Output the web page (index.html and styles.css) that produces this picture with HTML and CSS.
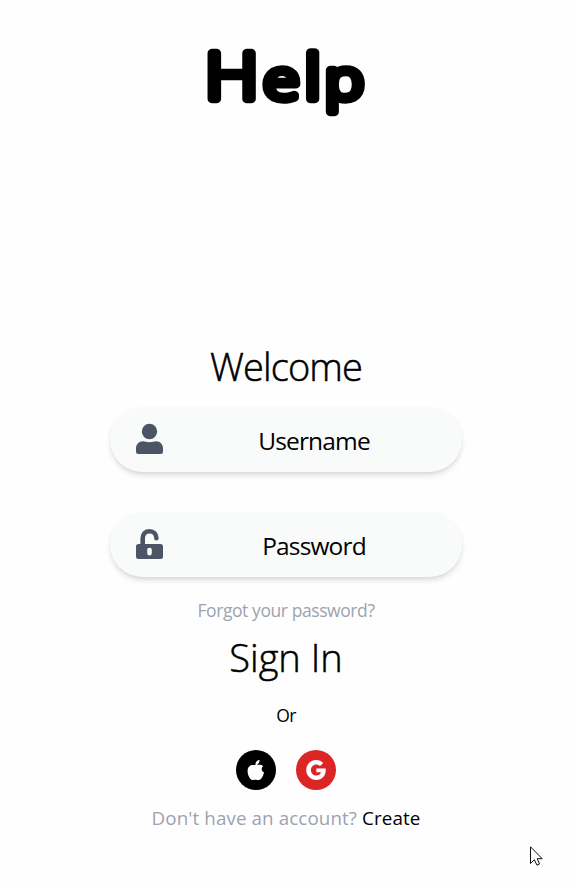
FILE: index.html
```html
<!DOCTYPE html>
<html lang="en">
<head>
    <meta charset="UTF-8">
    <meta name="viewport" content="width=device-width, initial-scale=1.0">
    <title>Help</title>
    <link rel="stylesheet" href="styles.css">
</head>
<body>
    <h1 class="logo">
        <svg width="180" height="90" viewBox="0 0 180 90">
            <text y="69" transform="scale(1.16 1)"><tspan x="4.3">H</tspan><tspan class="small" x="54.8">e</tspan><tspan class="ell" x="90.3">l</tspan><tspan class="small" x="107.8">p</tspan></text>
        </svg>
    </h1>

    <main class="login">
        <h2 class="welcome">Welcome</h2>

        <!-- login fields -->
        <div class="field">
            <svg class="field-icon" viewBox="0 0 27 30">
                <circle cx="13.5" cy="7.5" r="7.7"/>
                <path d="M7 17.2C9 17.2 10.5 18.2 13.5 18.2S18 17.2 20 17.2C24.5 17.2 27 20.5 27 24.5V27.5Q27 30 24.5 30H2.5Q0 30 0 27.5V24.5C0 20.5 2.5 17.2 7 17.2Z"/>
            </svg>
            <span class="field-text username">Username</span>
        </div>
        <div class="field">
            <svg class="field-icon" viewBox="0 0 27 30">
                <path class="shackle" d="M6.7 17V9.2C6.7 4.8 9.5 2.3 13.5 2.3S20.4 5 20.4 9.3"/>
                <path fill-rule="evenodd" d="M2.5 15H24.5Q27 15 27 17.5V27.5Q27 30 24.5 30H2.5Q0 30 0 27.5V17.5Q0 15 2.5 15ZM13.5 18.7C12 18.7 11.2 19.6 11.2 21V24C11.2 25.6 12 26.4 13.5 26.4S15.8 25.6 15.8 24V21C15.8 19.6 15 18.7 13.5 18.7Z"/>
            </svg>
            <span class="field-text password">Password</span>
        </div>

        <a class="forgot">Forgot your password?</a>
        <a class="sign-in">Sign In</a>
        <p class="or">Or</p>

        <!-- social buttons -->
        <div class="social">
            <span class="circle apple">
                <svg width="40" height="40" viewBox="0 0 40 40">
                    <path d="M19.4 15.3C19.3 11.8 21 10.3 23.5 10C23.8 12.2 22 14.3 20.5 15.3ZM27.2 16.2C25.1 17.6 25.1 21 28 22.4C27.2 26 25.3 29.5 23 30C21.8 30.2 21.2 29.8 19.8 29.8S17.7 30.1 16.5 30C13.8 29.5 11.6 25 11.6 21C11.6 17.2 13.8 14.9 16.4 14.9C17.8 14.9 18.8 15.1 19.8 15.1C21 15.1 22 14.7 23.8 14.7C25.2 14.7 26.4 15.2 27.2 16.2Z"/>
                </svg>
            </span>
            <span class="circle google">
                <svg width="40" height="40" viewBox="0 0 40 40">
                    <path d="M27.2 13.1L24.1 16.1C22.9 15 21.8 14.5 20.3 14.5C17.2 14.5 14.9 17 14.9 20S17.2 25.6 20.3 25.6C22.8 25.6 24.5 24.3 25.1 22.3H20.3V18.4H29.7C30.3 25.2 26.6 30 20.3 30C14.6 30 10.2 25.6 10.2 20S14.6 10 20.3 10C23 10 25.3 11 27.2 13.1Z"/>
                </svg>
            </span>
        </div>

        <p class="account">Don't have an account? <a class="create">Create</a></p>
    </main>

    <!-- mouse pointer -->
    <svg class="pointer" width="14" height="21" viewBox="0 0 14 21">
        <path d="M.5.8V17.5L4.3 13.7L7 19.2L9.5 18L7.2 12.7H12.2Z"/>
    </svg>
</body>
</html>
```

FILE: styles.css
```css
* {
    box-sizing: border-box;
}
body {
    margin: 0;
    height: 882px;
    overflow: hidden;
    background-color: #fefefe;
    color: #000;
    font-family: 'Open Sans', 'Noto Sans', sans-serif;
}
h1, h2, p {
    margin: 0;
    font-weight: 400;
}
/* big rounded title */
.logo {
    height: 340px;
    padding: 30px 0 0 200px;
}
.logo svg {
    display: block;
}
.logo text {
    font-family: 'Open Sans', sans-serif;
    font-size: 64px;
    font-weight: 300;
    stroke: #000;
    stroke-width: 8.5px;
    stroke-linejoin: round;
}
.logo .small {
    font-size: 56px;
}
.logo .ell {
    font-size: 60px;
}
.login {
    display: flex;
    flex-direction: column;
    align-items: center;
    width: 572px;
}
.welcome, .sign-in {
    font-size: 38px;
    font-weight: 300;
    line-height: 52px;
    -webkit-text-stroke: 0.5px #000;
}
.welcome {
    height: 67px;
    letter-spacing: -0.9px;
}
/* rounded fields */
.field {
    display: flex;
    align-items: center;
    width: 352px;
    height: 65px;
    margin-bottom: 40px;
    padding: 0 26px;
    border-radius: 33px;
    background-color: #f9fbfa;
    box-shadow: 0 4px 6px -1px rgba(0, 0, 0, 0.12), 0 2px 4px -1px rgba(0, 0, 0, 0.07);
}
.field-icon {
    width: 27px;
    height: 30px;
    margin-top: -2px;
    fill: #4b5565;
    overflow: visible;
}
.shackle {
    fill: none;
    stroke: #4b5565;
    stroke-width: 4.6;
    stroke-linecap: round;
}
.field-text {
    flex: 1;
    padding: 1px 0 0 29px;
    text-align: center;
    font-size: 24.5px;
    letter-spacing: -0.85px;
}
.forgot {
    margin-top: -21px;
    font-size: 17.5px;
    line-height: 28px;
    color: #9ca3af;
    letter-spacing: -0.42px;
}
.sign-in {
    margin-top: 7px;
    letter-spacing: 0;
}
.or {
    margin-top: 20px;
    font-size: 17.5px;
    line-height: 24px;
    letter-spacing: -0.7px;
}
.social {
    display: flex;
    gap: 20px;
    margin-top: 23px;
}
.circle {
    width: 40px;
    height: 40px;
    border-radius: 50%;
}
.circle svg {
    display: block;
    fill: #fff;
}
.apple {
    background-color: #000;
}
.google {
    background-color: #dc2626;
}
.account {
    margin-top: 14px;
    font-size: 18.8px;
    line-height: 28px;
    color: #9ca3af;
    white-space: nowrap;
    letter-spacing: 0.1px;
}
.create {
    color: #000;
}
.pointer {
    position: absolute;
    left: 530px;
    top: 846px;
    fill: #fff;
    stroke: #111;
    stroke-width: 1;
}
```
